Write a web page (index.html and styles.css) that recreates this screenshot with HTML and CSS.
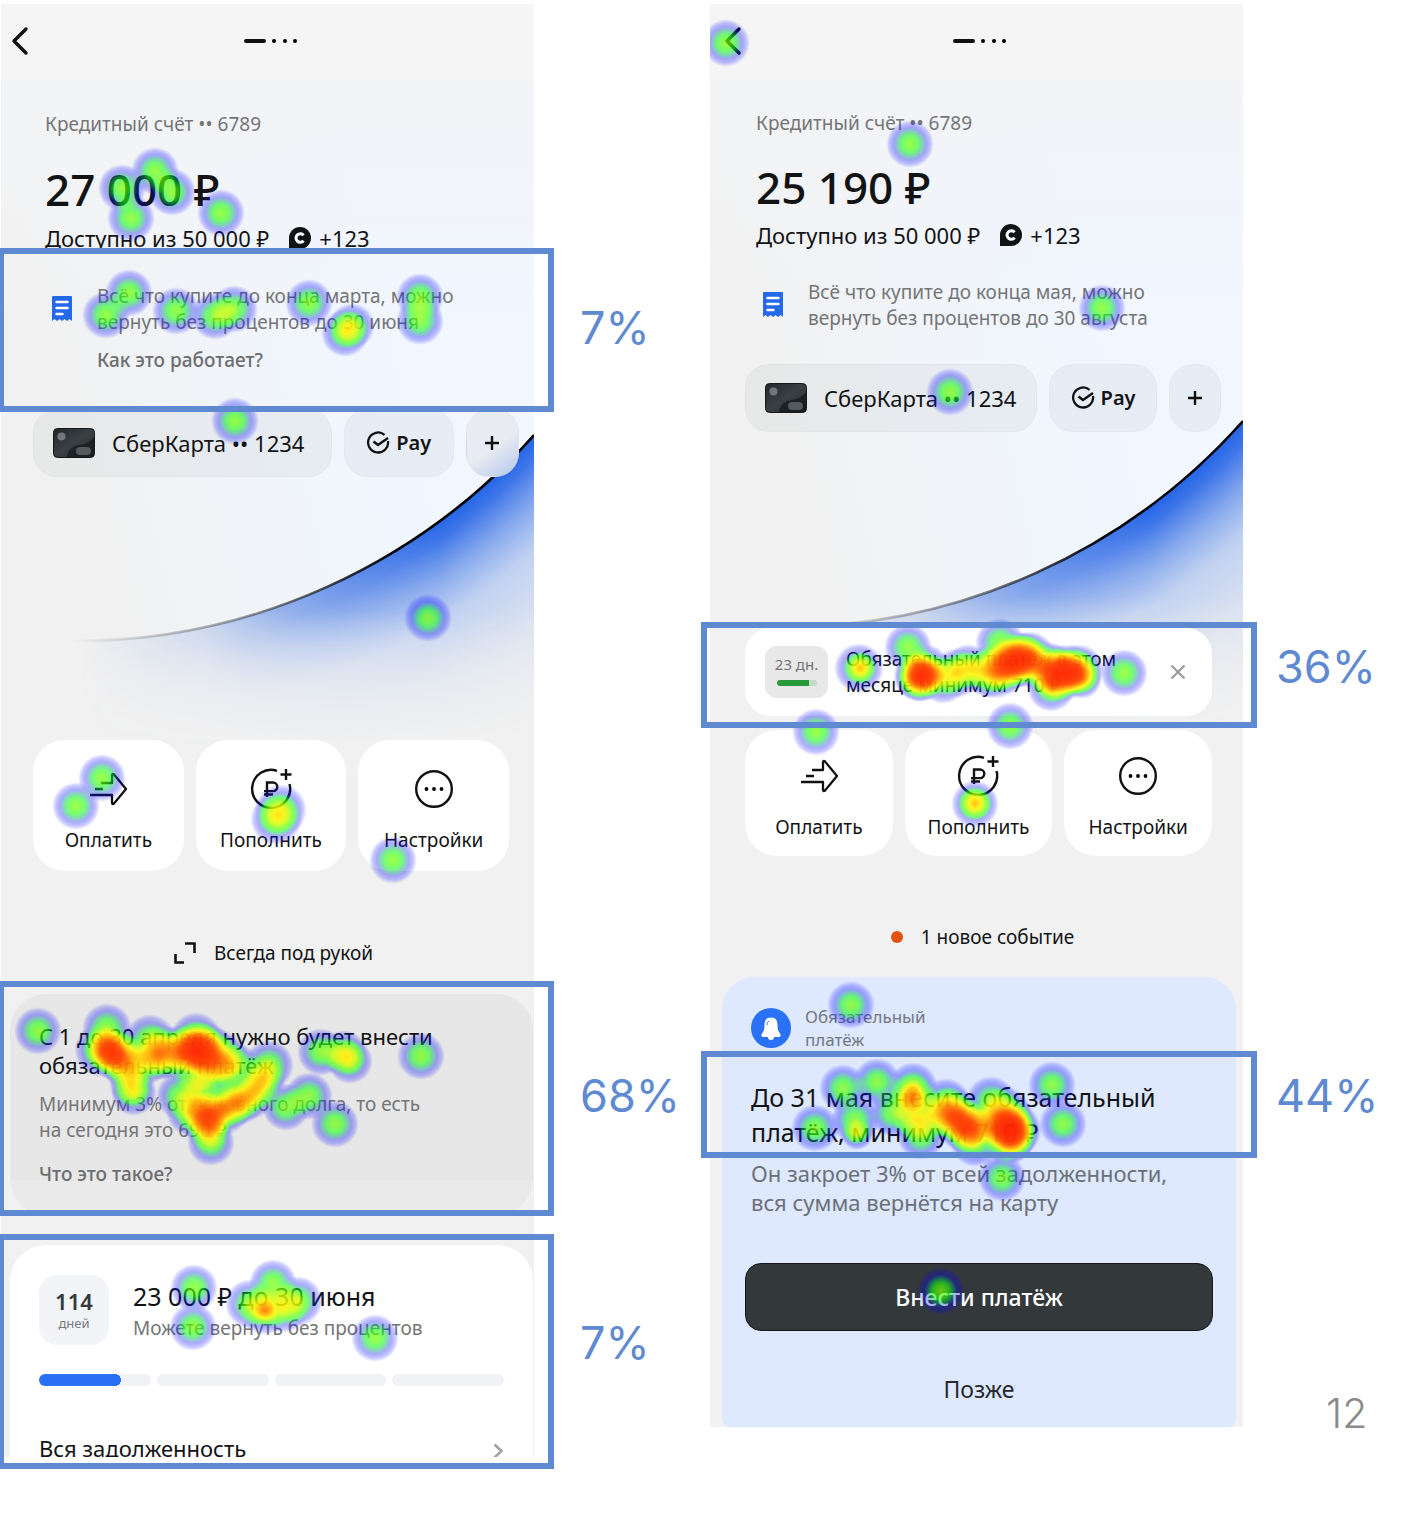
FILE: index.html
```html
<!DOCTYPE html>
<html lang="ru">
<head>
<meta charset="utf-8">
<meta name="viewport" content="width=device-width, initial-scale=1">
<title>Тепловая карта: кредитный счёт</title>
<link rel="stylesheet" href="styles.css">
</head>
<body>
<svg class="defs" aria-hidden="true">
  <defs>
    <radialGradient id="spot">
      <stop offset="0" stop-color="#000" stop-opacity=".53"/>
      <stop offset=".22" stop-color="#000" stop-opacity=".47"/>
      <stop offset=".5" stop-color="#000" stop-opacity=".33"/>
      <stop offset=".75" stop-color="#000" stop-opacity=".16"/>
      <stop offset="1" stop-color="#000" stop-opacity="0"/>
    </radialGradient>
    <filter id="heat" filterUnits="userSpaceOnUse" x="-20" y="-20" width="1500" height="1600" color-interpolation-filters="sRGB">
      <feColorMatrix type="matrix" values="0 0 0 1 0  0 0 0 1 0  0 0 0 1 0  0 0 0 1 0"/>
      <feComponentTransfer>
        <feFuncR type="table" tableValues="0 0 0 0 .1 .38 .75 1 1 1 1"/>
        <feFuncG type="table" tableValues="0 0 0 .6 1 1 1 .95 .68 .3 .1"/>
        <feFuncB type="table" tableValues="1 1 1 .5 .1 0 0 0 0 0 0"/>
        <feFuncA type="table" tableValues="0 .22 .33 .45 .6 .68 .8 .88 .93 .96 .98"/>
      </feComponentTransfer>
    </filter>
    <linearGradient id="inner" gradientUnits="userSpaceOnUse" x1="60" y1="340" x2="400" y2="260">
      <stop offset="0" stop-color="#f1f6ff" stop-opacity="0"/>
      <stop offset=".6" stop-color="#f1f6ff" stop-opacity=".75"/>
      <stop offset="1" stop-color="#f1f6ff"/>
    </linearGradient>
    <linearGradient id="topfade" gradientUnits="userSpaceOnUse" x1="0" y1="0" x2="0" y2="240">
      <stop offset="0" stop-color="#f3f4f6" stop-opacity=".9"/>
      <stop offset="1" stop-color="#f3f4f6" stop-opacity="0"/>
    </linearGradient>
    <radialGradient id="glow" gradientUnits="userSpaceOnUse" cx="74" cy="-54" r="840">
      <stop offset=".731" stop-color="#2464e6"/>
      <stop offset=".75" stop-color="#2f6be8" stop-opacity=".92"/>
      <stop offset=".785" stop-color="#3f78ea" stop-opacity=".62"/>
      <stop offset=".83" stop-color="#5d8ff2" stop-opacity=".32"/>
      <stop offset=".9" stop-color="#6a96f0" stop-opacity=".15"/>
      <stop offset="1" stop-color="#7aa0f0" stop-opacity="0"/>
    </radialGradient>
    <linearGradient id="fade" gradientUnits="userSpaceOnUse" x1="80" y1="0" x2="440" y2="0">
      <stop offset="0" stop-color="#fff" stop-opacity="0"/>
      <stop offset=".35" stop-color="#fff" stop-opacity=".2"/>
      <stop offset=".7" stop-color="#fff" stop-opacity=".65"/>
      <stop offset="1" stop-color="#fff"/>
    </linearGradient>
    <linearGradient id="lowfade" gradientUnits="userSpaceOnUse" x1="0" y1="530" x2="0" y2="670">
      <stop offset="0" stop-color="#000" stop-opacity="0"/>
      <stop offset="1" stop-color="#000"/>
    </linearGradient>
    <mask id="fademask" maskUnits="userSpaceOnUse" x="0" y="0" width="533" height="700"><rect width="533" height="700" fill="url(#fade)"/><rect width="533" height="700" fill="url(#lowfade)"/></mask>
    <linearGradient id="edge" gradientUnits="userSpaceOnUse" x1="70" y1="0" x2="400" y2="0">
      <stop offset="0" stop-color="#111" stop-opacity="0"/>
      <stop offset=".5" stop-color="#222" stop-opacity=".4"/>
      <stop offset="1" stop-color="#000"/>
    </linearGradient>
    <linearGradient id="plastic" x1="0" y1="0" x2="1" y2="1">
      <stop offset="0" stop-color="#22272b"/><stop offset=".5" stop-color="#3a4043"/><stop offset="1" stop-color="#24282b"/>
    </linearGradient>

    <symbol id="i-back" viewBox="0 0 18 30"><path d="M15 3 3 15l12 12" fill="none" stroke="#111" stroke-width="3.4" stroke-linecap="round" stroke-linejoin="round"/></symbol>
    <symbol id="i-pager" viewBox="0 0 56 8"><path d="M3 4h18" stroke="#111" stroke-width="4" stroke-linecap="round"/><circle cx="31" cy="4" r="2"/><circle cx="42" cy="4" r="2"/><circle cx="52" cy="4" r="2"/></symbol>
    <symbol id="i-bonus" viewBox="0 0 22 22"><path d="M0 22V11a11 11 0 1 1 11 11z" fill="#101214"/><path d="M14.600 8.200a4.300 4.300 0 1 0 0 5.600" fill="none" stroke="#fff" stroke-width="3"/></symbol>
    <symbol id="i-receipt" viewBox="0 0 22 26"><path d="M2 0h18q1 0 1 1v24l-2.500-2-2.500 2-2.500-2-2.500 2-2.500-2L6 25l-2.500-2L1 25V1q0-1 1-1z" fill="#2469ea"/><path d="M5.500 6h11M5.500 12h11M5.500 18h6" stroke="#fff" stroke-width="2.400" stroke-linecap="round"/></symbol>
    <symbol id="i-card" viewBox="0 0 42 30"><rect x=".5" y=".5" width="41" height="29" rx="4" fill="url(#plastic)" stroke="#17191b"/><path d="M14 29c1-9 7-11 13-12s10-3 14-8v16q0 4-4 4z" fill="#15191b" opacity=".75"/><circle cx="8.500" cy="8.500" r="4" fill="#70777c"/><rect x="23" y="19" width="15" height="8" rx="4" fill="#53595d"/></symbol>
    <symbol id="i-pay" viewBox="0 0 24 24"><path d="M22 10a10 10 0 1 1-3.500-6.200" fill="none" stroke="#111" stroke-width="2.300"/><path d="m7.500 10.500 4.500 3.500L22 7" fill="none" stroke="#111" stroke-width="2.600"/></symbol>
    <symbol id="i-plus" viewBox="0 0 16 16"><path d="M8 1v14M1 8h14" stroke="#111" stroke-width="2.400"/></symbol>
    <symbol id="i-send" viewBox="0 0 42 42"><path d="M14 15h11V7.500q0-2.500 2-1L39 21 27 35.500q-2 1.500-2-1V27H3M8 21h8" fill="none" stroke="#111" stroke-width="2.300" stroke-linejoin="round"/></symbol>
    <symbol id="i-topup" viewBox="0 0 42 42"><path d="M27 2.800A19 19 0 1 0 39.500 16" fill="none" stroke="#111" stroke-width="2.400"/><path d="M36 1v11M30.500 6.500h11M17 29V14.500h6a4.300 4.300 0 0 1 0 8.600h-9M14 26.500h9" fill="none" stroke="#111" stroke-width="2.400"/></symbol>
    <symbol id="i-more" viewBox="0 0 42 42"><circle cx="21" cy="21" r="17.800" fill="none" stroke="#111" stroke-width="2.400"/><circle cx="13.500" cy="21" r="1.900"/><circle cx="21" cy="21" r="1.900"/><circle cx="28.500" cy="21" r="1.900"/></symbol>
    <symbol id="i-corners" viewBox="0 0 22 22"><path d="M11 1.500h9.500V11M1.500 12v8.500H10" fill="none" stroke="#111" stroke-width="2.600"/></symbol>
    <symbol id="i-close" viewBox="0 0 16 16"><path d="m1.500 1.500 13 13m0-13-13 13" stroke="#9b9b9b" stroke-width="2.300"/></symbol>
    <symbol id="i-next" viewBox="0 0 12 16"><path d="m2.500 1.500 7 6.500-7 6.500" fill="none" stroke="#a2a2a2" stroke-width="2.500"/></symbol>
    <symbol id="i-bell" viewBox="0 0 40 40"><circle cx="20" cy="20" r="20" fill="#2972f5"/><path d="M20 9.500c5 0 6.500 3.500 6.500 7.500 0 6 1.500 6.500 3 9.500.5 1.500-.5 2.500-2 2.500h-4.500a3 3 0 0 1-6 0h-4.500c-1.500 0-2.500-1-2-2.500 1.500-3 3-3.500 3-9.500 0-4 1.500-7.500 6.500-7.500z" fill="#fff"/><path d="M16 17c0-2 .5-3.500 2-4" fill="none" stroke="#2972f5" stroke-width="1"/></symbol>
    <symbol id="i-arc" viewBox="0 0 533 700">
      <circle cx="74" cy="-54" r="614" fill="url(#inner)"/>
      <rect width="533" height="240" fill="url(#topfade)"/>
      <path d="M0 560.500L74 560A614 614 0 0 0 533 354V700H0z" fill="url(#glow)" mask="url(#fademask)"/>
      <path d="M74 560A614 614 0 0 0 533 354" fill="none" stroke="url(#edge)" stroke-width="2.600"/>
    </symbol>
  </defs>
</svg>

<main class="board">
  <section class="screen screen-a">
    <div class="phone">
      <svg class="arc"><use href="#i-arc"/></svg>
      <header class="nav">
        <button class="icon-button" aria-label="Назад"><svg width="18" height="30"><use href="#i-back"/></svg></button>
        <svg width="56" height="8"><use href="#i-pager"/></svg>
      </header>
      <div class="account">
        <p class="account-name">Кредитный счёт •• 6789</p>
        <h1 class="balance">27 000 ₽</h1>
        <p class="available">Доступно из 50 000 ₽ <span class="bonus"><svg width="22" height="22"><use href="#i-bonus"/></svg>+123</span></p>
        <div class="grace">
          <svg width="22" height="26"><use href="#i-receipt"/></svg>
          <div>
            <p>Всё что купите до конца марта, можно<br>вернуть без процентов до 30 июня</p>
            <a class="more" href="#how">Как это работает?</a>
          </div>
        </div>
      </div>
      <div class="pills">
        <button class="pill pill-card"><svg width="42" height="30"><use href="#i-card"/></svg>СберКарта •• 1234</button>
        <button class="pill pill-pay"><svg width="24" height="24"><use href="#i-pay"/></svg>Pay</button>
        <button class="pill pill-add" aria-label="Добавить"><svg width="16" height="16"><use href="#i-plus"/></svg></button>
      </div>
      <div class="actions">
        <button class="action"><svg width="42" height="42"><use href="#i-send"/></svg>Оплатить</button>
        <button class="action"><svg width="42" height="42"><use href="#i-topup"/></svg>Пополнить</button>
        <button class="action"><svg width="42" height="42"><use href="#i-more"/></svg>Настройки</button>
      </div>
      <p class="divider"><svg width="22" height="22"><use href="#i-corners"/></svg>Всегда под рукой</p>
      <article class="card card-due">
        <h2>С 1 до 30 апреля нужно будет внести<br>обязательный платёж</h2>
        <p>Минимум 3% от основного долга, то есть<br>на сегодня это 690 ₽</p>
        <a class="more" href="#what">Что это такое?</a>
      </article>
      <article class="card card-debt">
        <div class="debt-head">
          <div class="days"><strong>114</strong><span>дней</span></div>
          <div>
            <h2>23 000 ₽ до 30 июня</h2>
            <p>Можете вернуть без процентов</p>
          </div>
        </div>
        <div class="steps"><i class="step step-now"></i><i class="step"></i><i class="step"></i><i class="step"></i></div>
        <a class="all-debt" href="#debt">Вся задолженность<svg width="12" height="16"><use href="#i-next"/></svg></a>
      </article>
    </div>
    <svg class="heat" aria-hidden="true">
      <g transform="translate(-1 -4)" fill="url(#spot)" filter="url(#heat)">
        <circle cx="155" cy="171" r="24"/><circle cx="122" cy="188" r="24"/><circle cx="172" cy="192" r="24"/><circle cx="131" cy="218" r="24"/><circle cx="221" cy="213" r="24"/>
        <circle cx="129" cy="293" r="24"/><circle cx="106" cy="315" r="24"/><circle cx="176" cy="311" r="24"/><circle cx="215" cy="316" r="24"/><circle cx="234" cy="309" r="24"/><circle cx="309" cy="303" r="24"/><circle cx="420" cy="297" r="24"/><circle cx="420" cy="321" r="24"/><circle cx="345" cy="333" r="24"/><circle cx="352" cy="326" r="23"/>
        <circle cx="235" cy="421" r="24"/><circle cx="428" cy="618" r="24"/>
        <circle cx="102" cy="778" r="24"/><circle cx="76" cy="806" r="24"/><circle cx="281" cy="810" r="26"/><circle cx="276" cy="819" r="26"/><circle cx="393" cy="860" r="24"/>
        <circle cx="38" cy="1031" r="24"/><circle cx="107" cy="1028" r="25"/><circle cx="101" cy="1050" r="27"/><circle cx="104" cy="1049" r="22"/><circle cx="116" cy="1054" r="27"/><circle cx="122" cy="1058" r="26"/><circle cx="126" cy="1066" r="24"/><circle cx="131" cy="1084" r="22"/><circle cx="134" cy="1093" r="23"/><circle cx="112" cy="1052" r="24"/>
        <circle cx="150" cy="1040" r="26"/><circle cx="160" cy="1052" r="28"/><circle cx="162" cy="1056" r="24"/><circle cx="179" cy="1053" r="28"/><circle cx="186" cy="1050" r="24"/><circle cx="196" cy="1038" r="26"/><circle cx="196" cy="1048" r="28"/><circle cx="200" cy="1050" r="25"/><circle cx="214" cy="1055" r="28"/><circle cx="224" cy="1060" r="26"/><circle cx="236" cy="1067" r="24"/><circle cx="206" cy="1048" r="26"/><circle cx="145" cy="1064" r="22"/><circle cx="196" cy="1068" r="26"/><circle cx="214" cy="1074" r="26"/>
        <circle cx="180" cy="1096" r="24"/><circle cx="190" cy="1112" r="24"/><circle cx="202" cy="1116" r="26"/><circle cx="208" cy="1114" r="24"/><circle cx="211" cy="1116" r="25"/><circle cx="224" cy="1109" r="26"/><circle cx="232" cy="1105" r="23"/><circle cx="240" cy="1101" r="24"/><circle cx="250" cy="1096" r="24"/><circle cx="258" cy="1088" r="22"/><circle cx="264" cy="1077" r="22"/><circle cx="269" cy="1065" r="25"/><circle cx="198" cy="1090" r="20"/><circle cx="211" cy="1142" r="24"/><circle cx="209" cy="1130" r="22"/>
        <circle cx="286" cy="1107" r="24"/><circle cx="309" cy="1096" r="24"/><circle cx="335" cy="1124" r="24"/><circle cx="321" cy="1052" r="24"/><circle cx="344" cy="1053" r="23"/><circle cx="350" cy="1061" r="23"/><circle cx="421" cy="1056" r="24"/>
        <circle cx="194" cy="1288" r="24"/><circle cx="193" cy="1327" r="24"/><circle cx="273" cy="1283" r="24"/><circle cx="250" cy="1304" r="25"/><circle cx="265" cy="1310" r="25"/><circle cx="265" cy="1311" r="14"/><circle cx="284" cy="1308" r="25"/><circle cx="298" cy="1301" r="25"/><circle cx="375" cy="1338" r="24"/>
      </g>
    </svg>
    <div class="zone zone-grace"><span class="share">7%</span></div>
    <div class="zone zone-due"><span class="share">68%</span></div>
    <div class="zone zone-debt"><span class="share">7%</span></div>
  </section>

  <section class="screen screen-b">
    <div class="phone">
      <svg class="arc"><use href="#i-arc"/></svg>
      <header class="nav">
        <button class="icon-button" aria-label="Назад"><svg width="18" height="30"><use href="#i-back"/></svg></button>
        <svg width="56" height="8"><use href="#i-pager"/></svg>
      </header>
      <div class="account">
        <p class="account-name">Кредитный счёт •• 6789</p>
        <h1 class="balance">25 190 ₽</h1>
        <p class="available">Доступно из 50 000 ₽ <span class="bonus"><svg width="22" height="22"><use href="#i-bonus"/></svg>+123</span></p>
        <div class="grace">
          <svg width="22" height="26"><use href="#i-receipt"/></svg>
          <p>Всё что купите до конца мая, можно<br>вернуть без процентов до 30 августа</p>
        </div>
      </div>
      <div class="pills">
        <button class="pill pill-card"><svg width="42" height="30"><use href="#i-card"/></svg>СберКарта •• 1234</button>
        <button class="pill pill-pay"><svg width="24" height="24"><use href="#i-pay"/></svg>Pay</button>
        <button class="pill pill-add" aria-label="Добавить"><svg width="16" height="16"><use href="#i-plus"/></svg></button>
      </div>
      <div class="notice">
        <div class="countdown"><span>23 дн.</span><i class="meter"></i></div>
        <p>Обязательный платёж в этом<br>месяце минимум 710 ₽</p>
        <button class="icon-button" aria-label="Закрыть"><svg width="16" height="16"><use href="#i-close"/></svg></button>
      </div>
      <div class="actions">
        <button class="action"><svg width="42" height="42"><use href="#i-send"/></svg>Оплатить</button>
        <button class="action"><svg width="42" height="42"><use href="#i-topup"/></svg>Пополнить</button>
        <button class="action"><svg width="42" height="42"><use href="#i-more"/></svg>Настройки</button>
      </div>
      <p class="divider"><i class="dot"></i>1 новое событие</p>
      <article class="event">
        <div class="event-head"><svg width="40" height="40"><use href="#i-bell"/></svg><p>Обязательный<br>платёж</p></div>
        <h2>До 31 мая внесите обязательный<br>платёж, минимум 710 ₽</h2>
        <p class="event-text">Он закроет 3% от всей задолженности,<br>вся сумма вернётся на карту</p>
        <button class="primary">Внести платёж</button>
        <button class="later">Позже</button>
      </article>
    </div>
    <svg class="heat" aria-hidden="true">
      <g transform="translate(-710 -4)" fill="url(#spot)" filter="url(#heat)">
        <circle cx="726" cy="43" r="24"/><circle cx="910" cy="144" r="24"/><circle cx="1102" cy="308" r="24"/><circle cx="950" cy="392" r="24"/>
        <circle cx="859" cy="668" r="25"/><circle cx="861" cy="668" r="16"/><circle cx="908" cy="647" r="24"/><circle cx="919" cy="676" r="26"/><circle cx="921" cy="676" r="26"/><circle cx="920" cy="677" r="24"/><circle cx="920" cy="677" r="20"/><circle cx="926" cy="668" r="24"/><circle cx="943" cy="679" r="25"/><circle cx="957" cy="673" r="25"/><circle cx="968" cy="667" r="23"/>
        <circle cx="1000" cy="643" r="25"/><circle cx="988" cy="672" r="26"/><circle cx="996" cy="671" r="28"/><circle cx="1004" cy="668" r="26"/><circle cx="1010" cy="664" r="26"/><circle cx="1018" cy="660" r="28"/><circle cx="1024" cy="660" r="28"/><circle cx="1030" cy="656" r="25"/><circle cx="1022" cy="658" r="25"/><circle cx="1046" cy="668" r="27"/><circle cx="1055" cy="672" r="28"/><circle cx="1060" cy="675" r="28"/><circle cx="1058" cy="674" r="26"/><circle cx="1068" cy="670" r="26"/><circle cx="1079" cy="669" r="25"/><circle cx="1076" cy="672" r="25"/><circle cx="1051" cy="688" r="24"/><circle cx="1082" cy="679" r="20"/><circle cx="1124" cy="673" r="24"/>
        <circle cx="816" cy="732" r="24"/><circle cx="1010" cy="726" r="24"/><circle cx="975" cy="804" r="24"/><circle cx="975" cy="803" r="18"/>
        <circle cx="851" cy="1005" r="24"/>
        <circle cx="843" cy="1088" r="24"/><circle cx="877" cy="1082" r="24"/><circle cx="913" cy="1087" r="25"/><circle cx="912" cy="1099" r="25"/><circle cx="912" cy="1098" r="16"/><circle cx="855" cy="1120" r="24"/><circle cx="857" cy="1134" r="16"/><circle cx="815" cy="1128" r="24"/><circle cx="893" cy="1113" r="24"/><circle cx="914" cy="1120" r="22"/><circle cx="932" cy="1116" r="24"/><circle cx="921" cy="1136" r="24"/><circle cx="946" cy="1103" r="25"/>
        <circle cx="951" cy="1113" r="27"/><circle cx="956" cy="1118" r="25"/><circle cx="962" cy="1124" r="27"/><circle cx="967" cy="1127" r="26"/><circle cx="970" cy="1130" r="24"/><circle cx="975" cy="1142" r="25"/><circle cx="991" cy="1101" r="25"/><circle cx="1004" cy="1113" r="27"/><circle cx="1007" cy="1121" r="28"/><circle cx="1011" cy="1132" r="28"/><circle cx="1009" cy="1128" r="26"/><circle cx="1010" cy="1139" r="25"/><circle cx="1016" cy="1130" r="26"/><circle cx="986" cy="1124" r="22"/><circle cx="1008" cy="1136" r="28"/><circle cx="1002" cy="1178" r="24"/><circle cx="1052" cy="1085" r="24"/><circle cx="1063" cy="1124" r="24"/>
        <circle cx="941" cy="1291" r="24"/>
      </g>
    </svg>
    <div class="zone zone-notice"><span class="share">36%</span></div>
    <div class="zone zone-event"><span class="share">44%</span></div>
  </section>
  <span class="page-number">12</span>
</main>
</body>
</html>
```
FILE: styles.css
```css
* { box-sizing: border-box; }

body {
  margin: 0;
  background: #fff;
  color: #111315;
  font-family: "Noto Sans", "Open Sans", sans-serif;
  font-size: 19px;
  line-height: 26px;
}

h1, h2, p { margin: 0; font-weight: 400; }
button { border: 0; padding: 0; background: none; color: inherit; font: inherit; cursor: pointer; }
a { color: inherit; text-decoration: none; }
svg { display: block; flex: none; }

.defs { position: absolute; width: 0; height: 0; }

.board {
  display: grid;
  grid-template-columns: 533fr 176fr 533fr 159fr;
  align-items: start;
  padding: 4px 0 59px 1px;
}

.screen { position: relative; min-width: 0; }
.screen-a { grid-column: 1; }
.screen-b { grid-column: 3; }

.phone {
  position: relative;
  isolation: isolate;
  overflow: hidden;
  background: #f1f1f1;
}

.arc { position: absolute; z-index: -1; left: 0; top: 77px; width: 100%; aspect-ratio: 533 / 700; }
.screen-b .arc { top: 63px; }

.nav {
  display: grid;
  grid-template-columns: 1fr auto 1fr;
  align-items: center;
  height: 77px;
  padding: 0 4px 3px 10px;
  background: #f5f5f5;
}
.screen-b .nav { padding: 0 8px 3px 14px; }
.icon-button { display: grid; place-items: center; justify-self: start; }

/* Account summary */
.account { padding: 30px 44px 0; white-space: nowrap; }
.account-name { color: #747577; }
.balance { margin-top: 28px; font-size: 44px; font-weight: 500; line-height: 48px; }
.available { display: flex; align-items: center; gap: 20px; margin-top: 11px; font-size: 22px; line-height: 28px; }
.bonus { display: flex; align-items: center; gap: 8px; }
.grace { display: flex; gap: 24px; margin-top: 31px; padding-left: 6px; color: #747577; }
.grace > svg { margin-top: 13px; }
.more { display: block; width: fit-content; margin-top: 12px; color: #6c6d70; font-weight: 500; }

.screen-b .account { padding: 29px 46px 0; }
.screen-b .balance { margin-top: 27px; }
.screen-b .available { margin-top: 10px; }
.screen-b .grace { margin-top: 30px; }

/* Payment pills */
.pills { display: grid; grid-template-columns: 298fr 110fr 53fr; gap: 12px; padding: 36px 15px 0 32px; }
.pill {
  display: flex;
  align-items: center;
  justify-content: center;
  min-width: 0;
  height: 68px;
  border: 1px solid rgba(0, 0, 0, .02);
  border-radius: 24px;
  background: rgba(30, 35, 50, .045);
  font-size: 20px;
  white-space: nowrap;
}
.pill-card { justify-content: flex-start; gap: 17px; padding-left: 19px; font-size: 22px; }
.pill-pay { gap: 6px; font-weight: 600; }
.screen-a .pill-add { background: linear-gradient(145deg, #e8ebf2 55%, #b4c7ec); }
.screen-b .pills { padding: 33px 22px 0 35px; }

/* Quick actions */
.actions { display: grid; grid-template-columns: repeat(3, 1fr); gap: 12px; padding: 263px 25px 0 32px; }
.action {
  display: flex;
  flex-direction: column;
  align-items: center;
  gap: 17px;
  height: 131px;
  padding-top: 28px;
  border-radius: 32px;
  background: #fff;
}
.screen-b .actions { padding: 14px 31px 0 35px; }
.screen-b .action { height: 126px; padding-top: 25px; }

.divider { display: flex; align-items: center; justify-content: center; gap: 18px; margin-top: 69px; padding-left: 12px; }
.dot { width: 12px; height: 12px; border-radius: 50%; background: #e2530f; }
.screen-b .divider { margin-top: 68px; }

/* Cards of the first screen */
.card { margin: 0 1px 0 9px; padding: 28px 29px; border-radius: 36px; white-space: nowrap; }
.card h2 { font-size: 22px; line-height: 29px; }
.card p { color: #747577; }
.card-due { margin-top: 28px; background: linear-gradient(#e7e7e7 186px, #eaeaea 186px); }
.card-due p { margin-top: 11px; }
.card-due .more { margin-top: 18px; }
.card-debt { margin-top: 30px; padding: 30px 29px 0; border-radius: 36px 36px 0 0; background: #fff; }
.debt-head { display: flex; gap: 24px; }
.card-debt h2 { margin-top: 7px; font-size: 25px; }
.card-debt p { margin-top: 4px; }
.days {
  display: flex;
  flex-direction: column;
  align-items: center;
  justify-content: center;
  width: 70px;
  height: 70px;
  border-radius: 18px;
  background: #f2f4f7;
  color: #747a80;
  font-size: 13px;
  line-height: 18px;
}
.days strong { color: #343a40; font-size: 22px; font-weight: 600; line-height: 26px; }
.steps { display: grid; grid-template-columns: repeat(4, 1fr); gap: 6px; margin-top: 29px; }
.step { height: 12px; border-radius: 6px; background: #f1f2f5; }
.step-now { background: radial-gradient(circle 6px at 76px 6px, #2a70f4 6px, transparent 6px), linear-gradient(90deg, #2a70f4 76px, #f1f2f5 76px); }
.all-debt {
  display: flex;
  justify-content: space-between;
  height: 24px;
  margin-top: 47px;
  overflow: hidden;
  font-size: 22px;
  line-height: 30px;
}
.all-debt svg { margin-top: 10px; }

/* Reminder of the second screen */
.notice {
  display: flex;
  align-items: center;
  gap: 18px;
  height: 88px;
  margin: 196px 31px 0 35px;
  padding: 0 26px 0 20px;
  border-radius: 26px;
  background: #fff;
}
.notice p { flex: 1; white-space: nowrap; }
.countdown {
  display: flex;
  flex-direction: column;
  align-items: center;
  width: 63px;
  height: 52px;
  padding-top: 7px;
  border-radius: 12px;
  background: #e8e8e8;
  color: #747577;
  font-size: 15px;
  line-height: 22px;
  white-space: nowrap;
}
.meter { width: 40px; height: 6px; margin-top: 5px; border-radius: 3px; background: linear-gradient(90deg, #2a9a3e 32px, #c4d9c7 32px); }

.event {
  display: flex;
  flex-direction: column;
  margin: 27px 7px 0 12px;
  padding: 28px 23px 22px;
  border-radius: 32px 32px 8px 8px;
  background: #dee8ff;
  white-space: nowrap;
}
.event-head { display: flex; align-items: center; gap: 14px; padding-left: 6px; color: #72777f; font-size: 17px; line-height: 23px; }
.event h2 { margin: 29px 0 0 6px; font-size: 25px; line-height: 35px; }
.event-text { margin: 9px 0 0 6px; color: #6b7078; font-size: 22px; line-height: 29px; }
.primary { height: 68px; margin-top: 46px; border: 1px solid #14181a; border-radius: 16px; background: #33383b; color: #fff; font-size: 23px; font-weight: 500; }
.later { align-self: center; margin-top: 43px; color: #25282d; font-size: 23px; line-height: 31px; }

/* Overlay: attention map and measured zones */
.heat { position: absolute; inset: 0; width: 100%; height: 100%; overflow: hidden; pointer-events: none; }
.zone {
  position: absolute;
  left: -3px;
  right: -20px;
  display: flex;
  align-items: center;
  border: 6px solid #5f8ad2;
}
.screen-b .zone { left: -9px; right: -14px; }
.zone-grace { top: 244px; height: 164px; }
.zone-due { top: 977px; height: 235px; }
.zone-debt { top: 1230px; height: 235px; padding-bottom: 12px; }
.zone-notice { top: 618px; height: 106px; padding-bottom: 12px; }
.zone-event { top: 1047px; height: 107px; padding-bottom: 12px; }
.share {
  position: absolute;
  left: 100%;
  margin: 0 0 5px 32px;
  color: #5f8ad2;
  font-family: Inter, sans-serif;
  font-size: 45px;
  font-weight: 400;
  line-height: 56px;
}
.screen-b .share { margin-left: 25px; }

.page-number {
  grid-column: 4;
  align-self: end;
  margin: 0 0 20px 83px;
  color: #8a8a8a;
  font-family: Inter, sans-serif;
  font-size: 41px;
  font-weight: 300;
  line-height: 48px;
}
```
